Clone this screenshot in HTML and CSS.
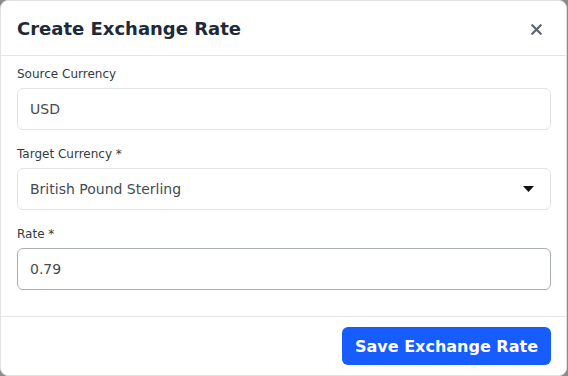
FILE: index.html
```html
<!DOCTYPE html>
<html>
<head>
<meta charset="utf-8">
<link rel="stylesheet" href="styles.css">
</head>
<body>
<div class="modal">
  <div class="modal-header">
    <h2 class="modal-title">Create Exchange Rate</h2>
    <button class="close-btn" aria-label="Close">
      <svg width="11" height="11" viewBox="0 0 11 11"><path d="M1.3 1.3 L9.7 9.7 M9.7 1.3 L1.3 9.7" stroke="#5f6673" stroke-width="2.3" stroke-linecap="round"/></svg>
    </button>
  </div>
  <div class="modal-body">
    <div class="field">
      <label class="label">Source Currency</label>
      <div class="input">USD</div>
    </div>
    <div class="field">
      <label class="label">Target Currency *</label>
      <div class="input select">
        <span>British Pound Sterling</span>
        <svg class="caret" width="11" height="6" viewBox="0 0 11 6"><path d="M0 0 H11 L5.5 6 Z" fill="#111"/></svg>
      </div>
    </div>
    <div class="field">
      <label class="label">Rate *</label>
      <div class="input focused">0.79</div>
    </div>
  </div>
  <div class="modal-footer">
    <button class="save-btn">Save Exchange Rate</button>
  </div>
</div>
</body>
</html>
```
FILE: styles.css
```css
html, body {
  margin: 0;
  padding: 0;
  background: #8a8a8a;
}
body {
  font-family: "DejaVu Sans", sans-serif;
  width: 568px;
  height: 376px;
  overflow: hidden;
}
.modal {
  box-sizing: border-box;
  width: 567px;
  height: 376px;
  background: #fff;
  border: 1px solid #dfe2e6;
  border-radius: 8px;
  display: flex;
  flex-direction: column;
}
.modal-header {
  height: 54px;
  border-bottom: 1px solid #e3e5e8;
  display: flex;
  align-items: center;
  justify-content: space-between;
  padding: 0 24px 0 16px;
}
.modal-title {
  margin: 0;
  font-size: 18px;
  font-weight: bold;
  color: #1e2939;
  padding-top: 1px;
}
.close-btn {
  border: 0;
  background: none;
  padding: 0;
  display: flex;
  margin-top: 2px;
}
.modal-body {
  padding: 9px 15px 0 16px;
  flex: 1;
}
.field {
  margin-bottom: 15px;
}
.label {
  display: block;
  font-size: 12px;
  line-height: 18px;
  color: #343a40;
  margin-bottom: 5px;
}
.input {
  box-sizing: border-box;
  height: 42px;
  border: 1px solid #e2e4e7;
  border-radius: 6px;
  padding: 0 12px;
  font-size: 14px;
  color: #454b52;
  display: flex;
  align-items: center;
}
.select {
  justify-content: space-between;
  padding-right: 16px;
}
.caret {
  display: block;
}
.focused {
  border-color: #a9aeb5;
}
.modal-footer {
  border-top: 1px solid #e3e5e8;
  height: 58px;
  display: flex;
  align-items: center;
  justify-content: flex-end;
  padding: 0 15px 0 16px;
}
.save-btn {
  font-family: "DejaVu Sans", sans-serif;
  background: #175cff;
  color: #fff;
  border: 0;
  border-radius: 6px;
  height: 38px;
  width: 209px;
  padding: 0;
  font-size: 16px;
  font-weight: bold;
}
```
